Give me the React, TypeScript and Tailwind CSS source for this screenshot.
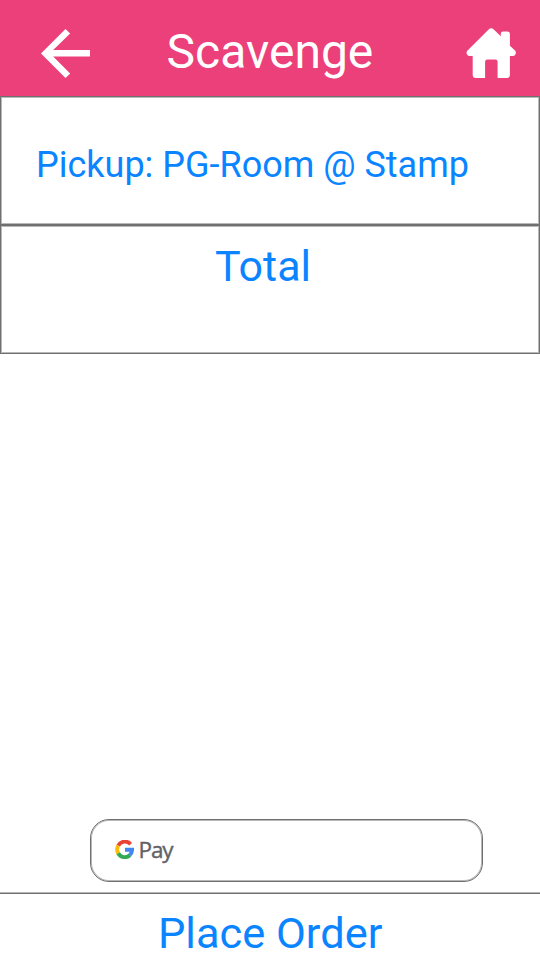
import React from "react";

function BackArrow() {
  return (
    <svg className="h-[49px] w-[49px]" viewBox="4 4 16 16" fill="#fff">
      <path d="M20 10.850H7.980l5.540-5.340L12 4l-8 8 8 8 1.520-1.510L7.980 12.980H20z" />
    </svg>
  );
}

function HomeIcon() {
  return (
    <svg className="h-[50px] w-[50px]" viewBox="-0.300 -0.200 50 50" fill="#fff">
      <path d="M22.600 1Q24.900-.8 27.200 1L34.500 8V5.500Q34.500 3.200 36.800 3.200H41Q43.600 3.200 43.600 5.800V17.500L49 22.500Q50 24 49.300 25.800Q48.600 27.700 46.800 27.700H43.600V46.500Q43.600 49.800 40.500 49.800H31.300V33.500Q31.300 31.200 29 31.200H21Q18.800 31.200 18.800 33.500V49.800H9.500Q6.400 49.800 6.400 46.500V27.700H3.200Q1.200 27.700.5 25.800Q-.2 24 1 22.500Z" />
    </svg>
  );
}

function GoogleMark() {
  return (
    <svg className="h-[19px] w-[19px]" viewBox="-0.500 0 19 19" fill="none" strokeWidth="3.900">
      <path stroke="#ea4335" d="M2.700 5.600A7.600 7.600 0 0 1 15.100 4.200" />
      <path stroke="#fbbc05" d="M2.700 13.200A7.700 7.700 0 0 1 2.700 5.600" />
      <path stroke="#34a853" d="M14.400 15.300A7.600 7.600 0 0 1 2.700 13.200" />
      <path stroke="#4285f4" d="M9.500 9.700H16.600A7.600 7.600 0 0 1 14.200 15.100" />
    </svg>
  );
}

export default function App() {
  return (
    <div className="flex h-[960px] w-[540px] flex-col overflow-hidden bg-white font-['Roboto',sans-serif] text-[#0a84ff]">
      <header className="flex h-24 shrink-0 items-start bg-[#ec407a]">
        <div className="w-[166.600px] shrink-0 pl-[41px] pt-[29px]">
          <BackArrow />
        </div>
        <h1 className="w-[299.400px] shrink-0 whitespace-nowrap pt-[24px] text-[48px] leading-[56px] text-white">Scavenge</h1>
        <div className="pt-[28px]">
          <HomeIcon />
        </div>
      </header>
      <section className="h-[129px] shrink-0 border border-[#707070] pl-[35px] pt-[47px] shadow-[inset_0_0_0_1px_#b8b8b8]">
        <p className="whitespace-nowrap text-[36px] leading-[42px]">Pickup: PG-Room @ Stamp</p>
      </section>
      <section className="h-[129px] shrink-0 border border-[#707070] pl-[214px] pt-[15px] shadow-[inset_0_0_0_1px_#b8b8b8]">
        <p className="whitespace-nowrap text-[43px] leading-[50px]">Total</p>
      </section>
      <div className="flex-1" />
      <button className="ml-[90px] flex h-[63px] w-[393px] shrink-0 items-start rounded-[19px] border border-[#707070] pl-[24px] pt-[20px] shadow-[inset_0_0_0_1px_#b8b8b8]">
        <GoogleMark />
        <span className="-mt-[5px] ml-[4.500px] font-['Open_Sans',sans-serif] text-[22.500px] leading-[30px] tracking-[-1.100px] text-[#5f6368] [-webkit-text-stroke:0.4px_#5f6368]">Pay</span>
      </button>
      <footer className="mt-[10px] h-[68px] shrink-0 border-t border-[#b8b8b8]">
        <div className="h-full border-t border-[#707070] pl-[158px] pt-[15px]">
          <p className="whitespace-nowrap text-[43.400px] leading-[50px]">Place Order</p>
        </div>
      </footer>
    </div>
  );
}
